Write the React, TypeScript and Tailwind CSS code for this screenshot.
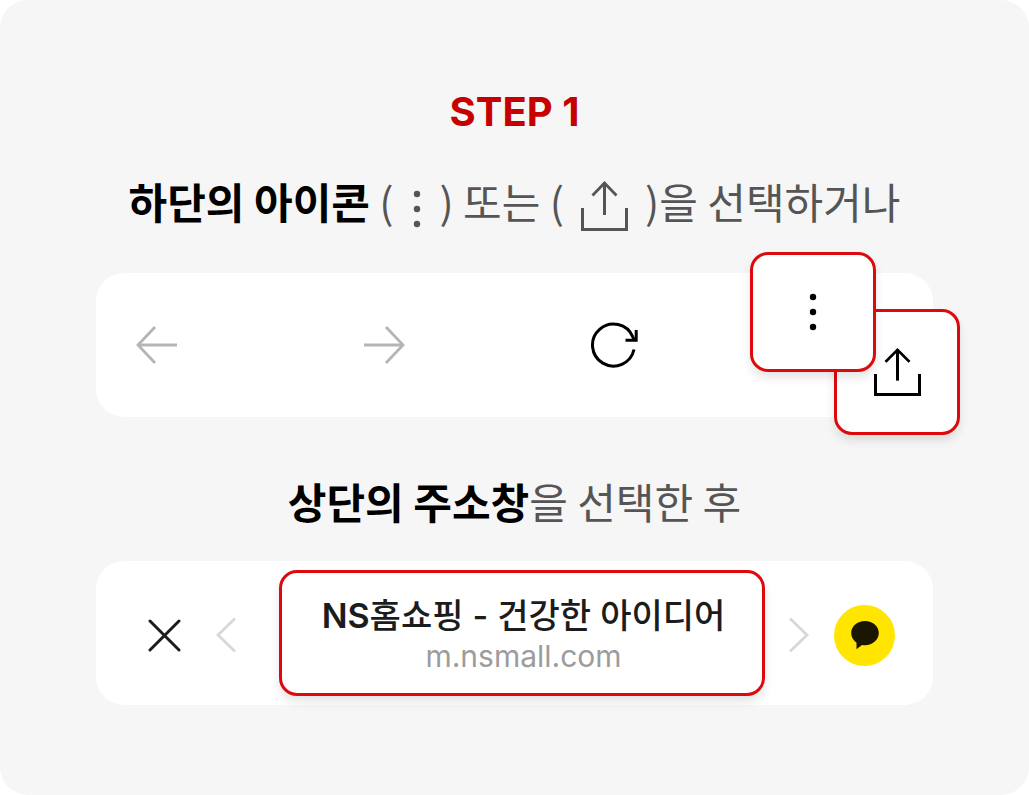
import type { ReactNode } from "react";

function ShareIcon({ className }: { className: string }) {
  return (
    <svg viewBox="0 0 47 50" preserveAspectRatio="none" fill="none" stroke="currentColor" className={className} aria-hidden="true">
      <path d="M1.5 27V48.5H45.5V27" strokeWidth="3" />
      <path d="M23.5 34V2" strokeWidth="3" />
      <path d="M11.5 14.5L23.5 2L35.5 14.5" strokeWidth="2.8" />
    </svg>
  );
}

function DotsIcon({ className }: { className: string }) {
  return (
    <svg viewBox="0 0 8 38" fill="currentColor" className={className} aria-hidden="true">
      <circle cx="4" cy="4" r="3.2" />
      <circle cx="4" cy="19" r="3.2" />
      <circle cx="4" cy="34" r="3.2" />
    </svg>
  );
}

function ArrowIcon({ className }: { className: string }) {
  return (
    <svg viewBox="0 0 42 38" fill="none" stroke="currentColor" strokeWidth="2.8" className={className} aria-hidden="true">
      <path d="M41 19H2" />
      <path d="M19 1L2 19L19 37" />
    </svg>
  );
}

function ReloadIcon() {
  return (
    <svg viewBox="0 0 48 46" fill="none" stroke="currentColor" strokeWidth="3" className="h-[46px] w-12" aria-hidden="true">
      <path d="M44 27.500A21 21 0 1 1 42.800 14.800L44.600 18.500" />
      <path d="M46.200 8V18.300H35.500" />
    </svg>
  );
}

function ChevronIcon({ className }: { className: string }) {
  return (
    <svg viewBox="0 0 20 36" fill="none" stroke="currentColor" strokeWidth="2.8" className={className} aria-hidden="true">
      <path d="M19 1.5L2 18L19 34.5" />
    </svg>
  );
}

function Heading({ children, className }: { children: ReactNode; className: string }) {
  return (
    <p className={`text-center text-[42px] leading-[60px] text-[#555555] ${className}`}>{children}</p>
  );
}

const highlight =
  "flex items-center justify-center rounded-[18px] border-3 border-[#dc0a0d] bg-white shadow-[0_6px_10px_rgba(0,0,0,0.1)]";

export default function App() {
  return (
    <main className="rounded-[28px] bg-[#f6f6f6] px-24 pt-[81px] pb-[90px] font-['Noto_Sans_CJK_KR',sans-serif]">
      <h1 className="text-center font-['Inter',sans-serif] text-[40px] leading-[62px] font-bold text-[#c60000]">STEP 1</h1>

      <Heading className="mt-7">
        <strong className="font-bold text-black">하단의 아이콘</strong> (
        <DotsIcon className="mx-[19px] inline-block h-10 w-2 align-[-10px]" />) 또는 (
        <ShareIcon className="mx-[17px] inline-block h-[50px] w-[47px] align-[-12px]" />
        )을 선택하거나
      </Heading>

      <div className="relative mt-[42px] flex h-36 items-center rounded-[28px] bg-white">
        <div className="ml-10 flex w-3/5 items-center justify-between text-[#b5b5b5]">
          <button type="button" aria-label="뒤로">
            <ArrowIcon className="h-[38px] w-[42px]" />
          </button>
          <button type="button" aria-label="앞으로">
            <ArrowIcon className="h-[38px] w-[42px] rotate-180" />
          </button>
          <button type="button" aria-label="새로고침" className="text-black">
            <ReloadIcon />
          </button>
        </div>
        <button type="button" aria-label="공유" className={`absolute top-9 right-[-27px] h-[126px] w-[126px] text-black ${highlight}`}>
          <ShareIcon className="h-12 w-[47px]" />
        </button>
        <button type="button" aria-label="더보기" className={`absolute top-[-21px] right-[57px] h-[120px] w-[126px] text-black ${highlight}`}>
          <DotsIcon className="h-[38px] w-2" />
        </button>
      </div>

      <Heading className="mt-[54px]">
        <strong className="font-bold text-black">상단의 주소창</strong>을 선택한 후
      </Heading>

      <div className="mt-[30px] flex h-36 items-center rounded-[28px] bg-white pr-[38px] pl-[52px]">
        <div className="flex items-center gap-[35px] pt-1">
          <button type="button" aria-label="닫기" className="text-[#1c1c1c]">
            <svg viewBox="0 0 33 33" fill="none" stroke="currentColor" strokeWidth="3" strokeLinecap="round" className="size-[33px]" aria-hidden="true">
              <path d="M2 2L31 31M31 2L2 31" />
            </svg>
          </button>
          <button type="button" aria-label="이전" className="text-[#d8d8d8]">
            <ChevronIcon className="h-9 w-5" />
          </button>
        </div>
        <button type="button" className={`mr-6 ml-[43px] h-[126px] flex-1 flex-col pl-[3px] ${highlight}`}>
          <span className="font-['Inter','Noto_Sans_CJK_KR',sans-serif] text-[34px] leading-[46px] font-medium text-[#1c1c1c]">
            <span className="font-semibold">NS</span>홈쇼핑 - 건강한 아이디어
          </span>
          <span className="font-['Inter',sans-serif] text-[30px] leading-[34px] text-[#9c9c9c]">m.nsmall.com</span>
        </button>
        <div className="flex items-center gap-[25px] pt-1">
          <button type="button" aria-label="다음" className="text-[#d8d8d8]">
            <ChevronIcon className="h-9 w-5 rotate-180" />
          </button>
          <button type="button" aria-label="카카오톡" className="flex size-[61px] items-center justify-center rounded-full bg-[#ffe500] text-[#1a1600]">
            <svg viewBox="0 0 28 28" fill="currentColor" className="size-7" aria-hidden="true">
              <path d="M14 0C6.300 0 .2 5.300 .2 12C.2 16 2.300 19.500 5.500 21.700V28.200L11 23.900C12 24.100 13 24.200 14 24.200C21.700 24.200 27.800 18.700 27.800 12C27.800 5.300 21.700 0 14 0Z" />
            </svg>
          </button>
        </div>
      </div>
    </main>
  );
}
